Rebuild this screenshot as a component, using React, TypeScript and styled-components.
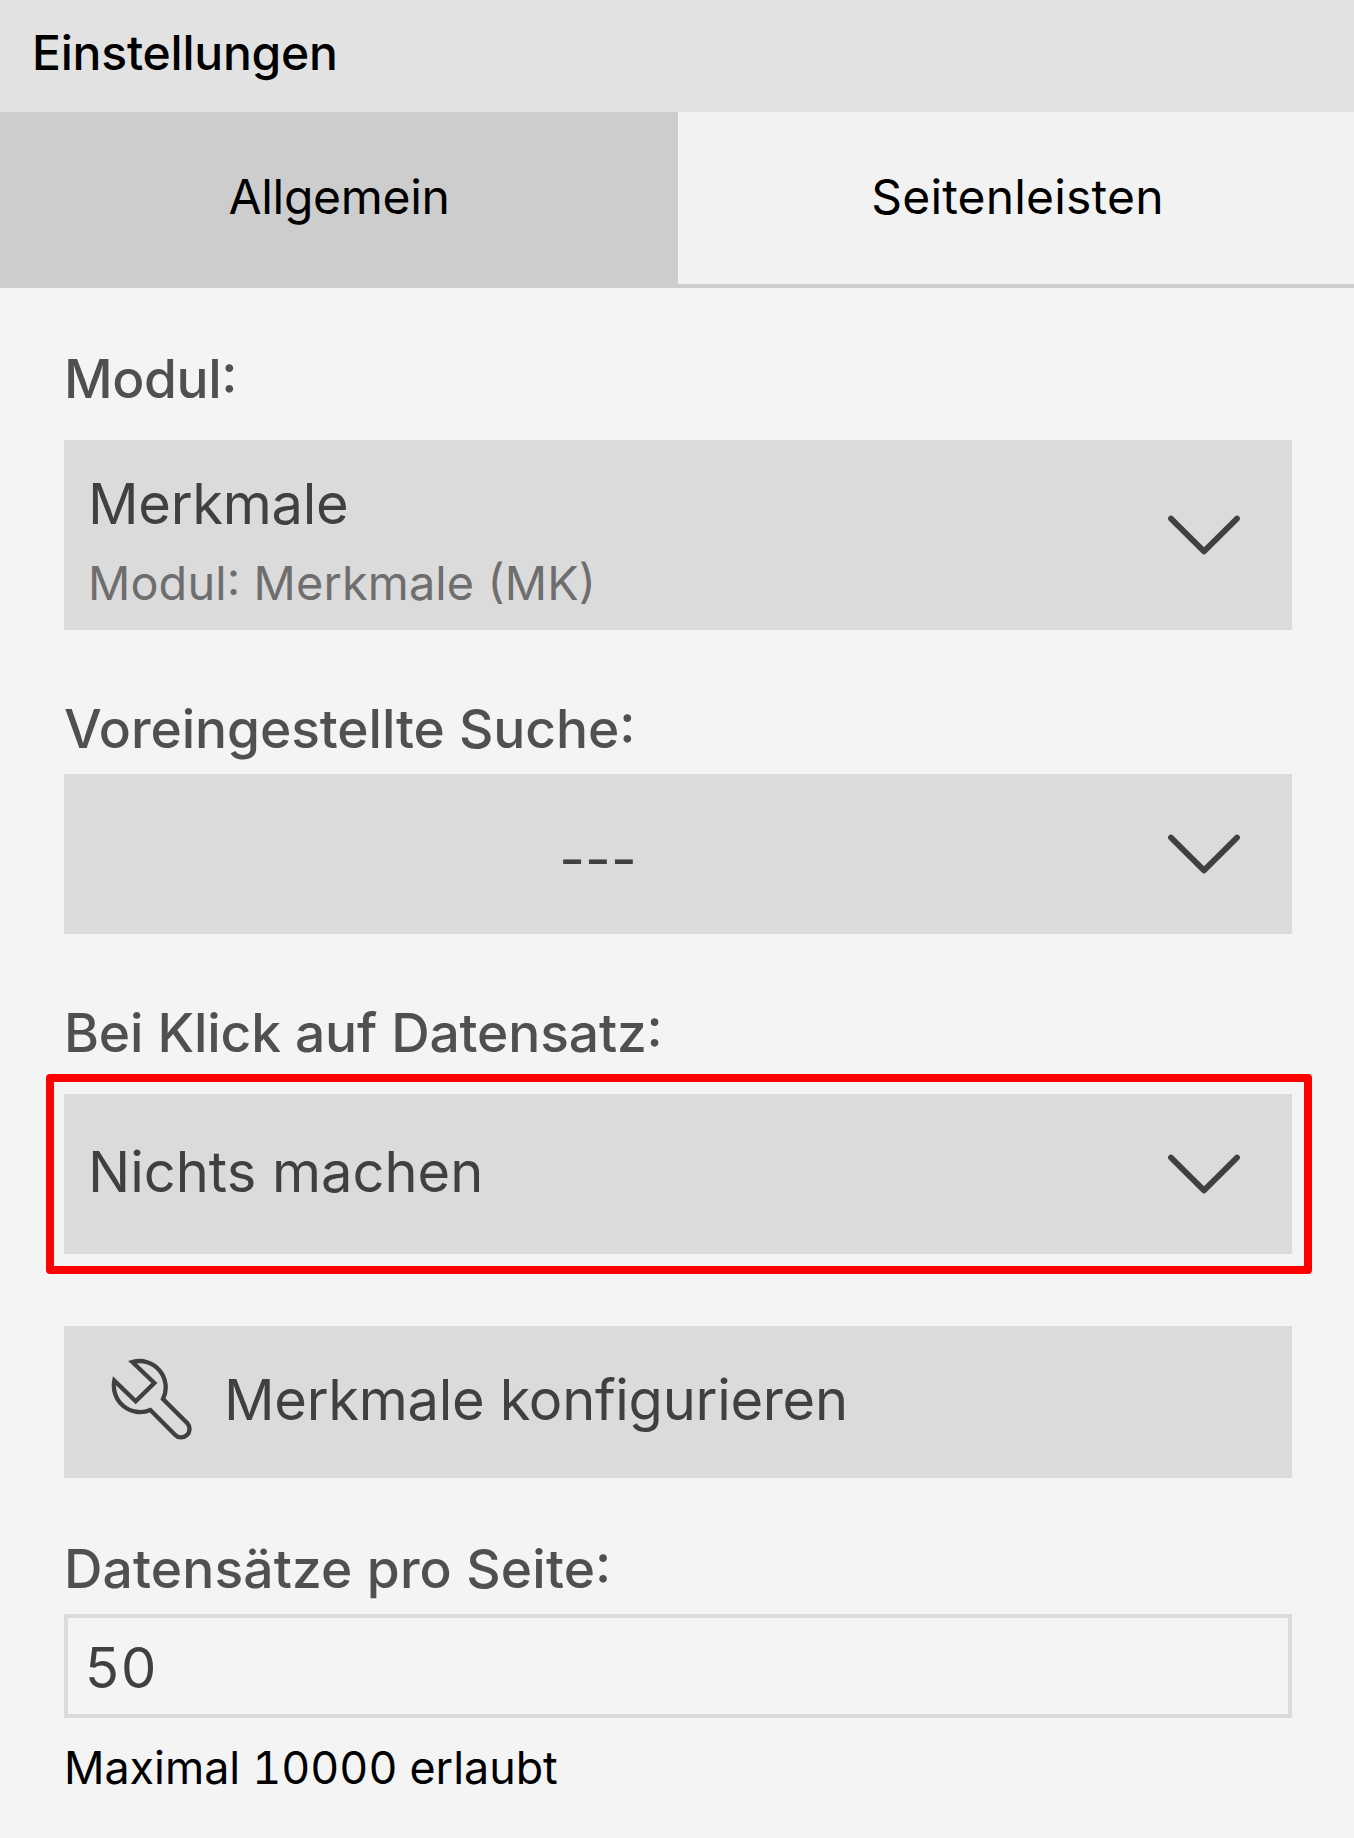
import React from "react";
import styled, { createGlobalStyle } from "styled-components";

const GlobalStyle = createGlobalStyle`
  * { box-sizing: border-box; }
  body {
    margin: 0;
    background: #f4f4f4;
    font-family: Inter, "Liberation Sans", sans-serif;
    font-optical-sizing: none;
    color: #000;
  }
`;

const Panel = styled.main`
  width: 1354px;
  height: 1838px;
  background: #f4f4f4;
  overflow: hidden;
`;

const Header = styled.header`
  height: 112px;
  padding: 0 32px 7px;
  display: flex;
  align-items: center;
  background: #e2e2e2;
  font-size: 48px;
  font-weight: 500;
  line-height: 64px;
  letter-spacing: -0.22px;
`;

const Tabs = styled.nav`
  display: grid;
  grid-template-columns: 678px 1fr;
  height: 176px;
`;

const Tab = styled.button<{ $active?: boolean }>`
  display: flex;
  align-items: center;
  justify-content: center;
  padding: 0 0 3px ${(p) => (p.$active ? 0 : 3)}px;
  border: 0;
  border-bottom: 4px solid #cdcdcd;
  background: ${(p) => (p.$active ? "#cdcdcd" : "#f2f2f2")};
  color: #000;
  font: inherit;
  font-size: 48px;
  line-height: 64px;
  letter-spacing: ${(p) => (p.$active ? -0.3 : 0.18)}px;
`;

const Form = styled.div`
  display: flex;
  flex-direction: column;
  padding: 54px 62px 0 64px;
`;

const Label = styled.label<{ $top?: number; $gap: number; $track: number }>`
  height: 72px;
  margin-top: ${(p) => p.$top ?? 0}px;
  margin-bottom: ${(p) => p.$gap}px;
  padding-top: 1px;
  font-size: 53.3px;
  font-weight: 500;
  font-feature-settings: "case" 1;
  line-height: 72px;
  letter-spacing: ${(p) => p.$track}px;
  color: #505050;
`;

const Select = styled.div<{ $height: number }>`
  position: relative;
  display: flex;
  height: ${(p) => p.$height}px;
  padding-left: 16px;
  background: #dbdbdb;
  color: #404040;
`;

const Value = styled.div`
  flex: 1;
  display: flex;
  flex-direction: column;
  justify-content: center;
  padding: 0 8px 5px;
  font-size: 56px;
  line-height: 80px;
`;

const EmptyValue = styled(Value)`
  padding: 9px 8px 0;
  text-align: center;
`;

const TwoLineValue = styled(Value)`
  justify-content: flex-start;
  padding: 24px 8px 0;
  letter-spacing: -0.28px;
`;

const SubValue = styled.span`
  font-size: 46.8px;
  font-feature-settings: "case" 1;
  line-height: 79px;
  letter-spacing: 0.14px;
  color: #6e6e6e;
`;

const ArrowCell = styled.div`
  width: 176px;
  display: flex;
  align-items: center;
  justify-content: center;
`;

const Highlight = styled.div`
  position: absolute;
  inset: -20px -20px -20px -18px;
  border: 8px solid #ff0000;
  border-radius: 4px;
  pointer-events: none;
`;

const ConfigureButton = styled.button`
  display: flex;
  align-items: center;
  gap: 31px;
  height: 152px;
  margin-top: 72px;
  padding: 0 45px;
  border: 0;
  background: #dbdbdb;
  color: #404040;
  font: inherit;
  font-size: 56px;
  line-height: 80px;
  letter-spacing: -0.3px;
`;

const ButtonText = styled.span`
  padding-bottom: 5px;
`;

const NumberInput = styled.input`
  height: 104px;
  padding: 4px 17px 0;
  border: 4px solid #dbdbdb;
  border-radius: 0;
  outline: 0;
  background: #f4f4f4;
  color: #404040;
  font: inherit;
  font-size: 56px;
  letter-spacing: 2px;
`;

const Hint = styled.div`
  margin-top: 18px;
  font-size: 44.8px;
  font-variant-numeric: tabular-nums;
  line-height: 64px;
`;

const Chevron = () => (
  <svg width="76" height="44" viewBox="0 0 76 44" fill="none">
    <path
      d="M5 5.6 38 38.4 71 5.6"
      stroke="#404040"
      strokeWidth="5.8"
      strokeLinecap="round"
      strokeLinejoin="round"
    />
  </svg>
);

const Wrench = () => (
  <svg width="84" height="88" viewBox="60 114 252 264" fill="none">
    <path
      d="M130 126 196 189 140 244 76 182A79 79 0 0 0 184 270L258 344A25 25 0 0 0 295 310L222 237A79 79 0 0 0 130 126Z"
      stroke="#404040"
      strokeWidth="13"
      strokeLinejoin="miter"
    />
  </svg>
);

export default function App() {
  return (
    <>
      <GlobalStyle />
      <Panel>
        <Header>Einstellungen</Header>
        <Tabs>
          <Tab $active>Allgemein</Tab>
          <Tab>Seitenleisten</Tab>
        </Tabs>
        <Form>
          <Label $gap={26} $track={-0.4}>Modul:</Label>
          <Select $height={190}>
            <TwoLineValue>
              Merkmale
              <SubValue>Modul: Merkmale (MK)</SubValue>
            </TwoLineValue>
            <ArrowCell><Chevron /></ArrowCell>
          </Select>
          <Label $top={62} $gap={10} $track={-0.08}>Voreingestellte Suche:</Label>
          <Select $height={160}>
            <EmptyValue>---</EmptyValue>
            <ArrowCell><Chevron /></ArrowCell>
          </Select>
          <Label $top={62} $gap={26} $track={-0.13}>Bei Klick auf Datensatz:</Label>
          <Select $height={160}>
            <Value>Nichts machen</Value>
            <ArrowCell><Chevron /></ArrowCell>
            <Highlight />
          </Select>
          <ConfigureButton>
            <Wrench />
            <ButtonText>Merkmale konfigurieren</ButtonText>
          </ConfigureButton>
          <Label $top={54} $gap={10} $track={0.14} htmlFor="page-size">Datensätze pro Seite:</Label>
          <NumberInput id="page-size" defaultValue="50" />
          <Hint>Maximal 10000 erlaubt</Hint>
        </Form>
      </Panel>
    </>
  );
}
